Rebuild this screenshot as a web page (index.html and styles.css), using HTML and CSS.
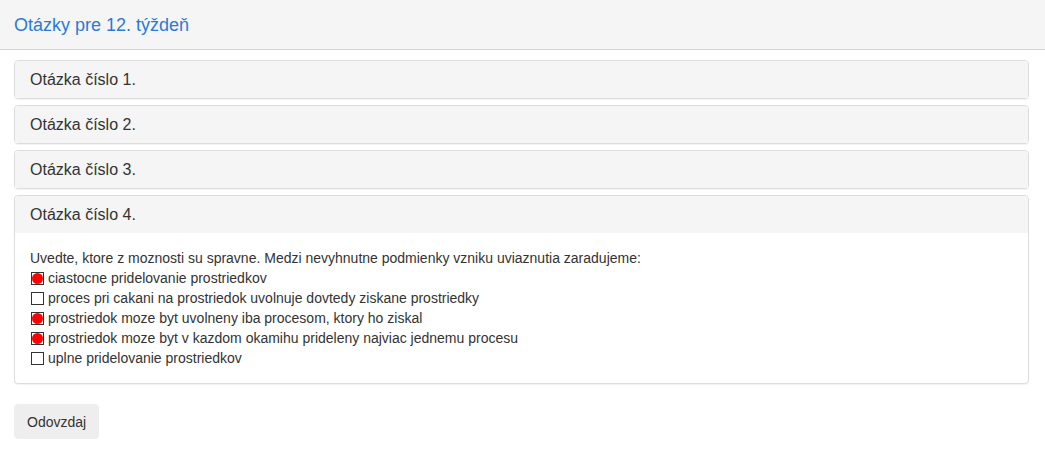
FILE: index.html
```html
<!DOCTYPE html>
<html lang="sk">
<head>
<meta charset="utf-8">
<title>Otázky pre 12. týždeň</title>
<link rel="stylesheet" href="styles.css">
</head>
<body>
<header class="topbar">
  <h1 class="topbar-title">Otázky pre 12. týždeň</h1>
</header>
<main class="content">
  <div class="panel-group">
    <section class="panel">
      <div class="panel-heading"><h2 class="panel-title">Otázka číslo 1.</h2></div>
    </section>
    <section class="panel">
      <div class="panel-heading"><h2 class="panel-title">Otázka číslo 2.</h2></div>
    </section>
    <section class="panel">
      <div class="panel-heading"><h2 class="panel-title">Otázka číslo 3.</h2></div>
    </section>
    <section class="panel">
      <div class="panel-heading"><h2 class="panel-title">Otázka číslo 4.</h2></div>
      <div class="panel-body">
        <p class="question">Uvedte, ktore z moznosti su spravne. Medzi nevyhnutne podmienky vzniku uviaznutia zaradujeme:</p>
        <label class="option"><span class="box checked"></span>ciastocne pridelovanie prostriedkov</label>
        <label class="option"><span class="box"></span>proces pri cakani na prostriedok uvolnuje dovtedy ziskane prostriedky</label>
        <label class="option"><span class="box checked"></span>prostriedok moze byt uvolneny iba procesom, ktory ho ziskal</label>
        <label class="option"><span class="box checked"></span>prostriedok moze byt v kazdom okamihu prideleny najviac jednemu procesu</label>
        <label class="option"><span class="box"></span>uplne pridelovanie prostriedkov</label>
      </div>
    </section>
  </div>
  <button class="btn" type="button">Odovzdaj</button>
</main>
</body>
</html>
```
FILE: styles.css
```css
* { box-sizing: border-box; }
html, body {
  margin: 0;
  padding: 0;
  background: #fff;
  font-family: "Liberation Sans", Arial, sans-serif;
  font-size: 14px;
  line-height: 20px;
  color: #333;
}
.topbar {
  background: #f5f5f5;
  border-bottom: 1px solid #d4d4d4;
  height: 50px;
  padding: 0 14px;
  display: flex;
  align-items: center;
}
.topbar-title {
  margin: 0;
  font-size: 18px;
  font-weight: normal;
  color: #2a7ad5;
  line-height: 20px;
}
.content {
  padding: 10px 16px 20px 14px;
}
.panel-group {
  display: flex;
  flex-direction: column;
  gap: 6px;
  margin-bottom: 20px;
}
.panel {
  border: 1px solid #ddd;
  border-radius: 4px;
  background: #fff;
  box-shadow: 0 1px 1px rgba(0,0,0,0.05);
}
.panel-heading {
  background: #f5f5f5;
  padding: 10px 15px;
  border-radius: 3px 3px 0 0;
}
.panel-title {
  margin: 0;
  font-size: 16px;
  font-weight: normal;
  line-height: 17px;
  color: #333;
}
.panel-body {
  padding: 15px;
}
.question {
  margin: 0;
}
.option {
  display: flex;
  align-items: center;
  margin-left: 1px;
}
.box {
  width: 13px;
  height: 13px;
  border: 1px solid #333;
  background: #fff;
  margin-right: 4px;
  flex: none;
  position: relative;
}
.box.checked::after {
  content: "";
  position: absolute;
  left: 0;
  top: 0;
  width: 11px;
  height: 11px;
  border-radius: 50%;
  background: #f00;
}
.btn {
  font-family: inherit;
  font-size: 14px;
  line-height: 20px;
  color: #333;
  background: #eee;
  border: 1px solid #eee;
  border-radius: 4px;
  padding: 6px 12px;
  height: 35px;
}
```
